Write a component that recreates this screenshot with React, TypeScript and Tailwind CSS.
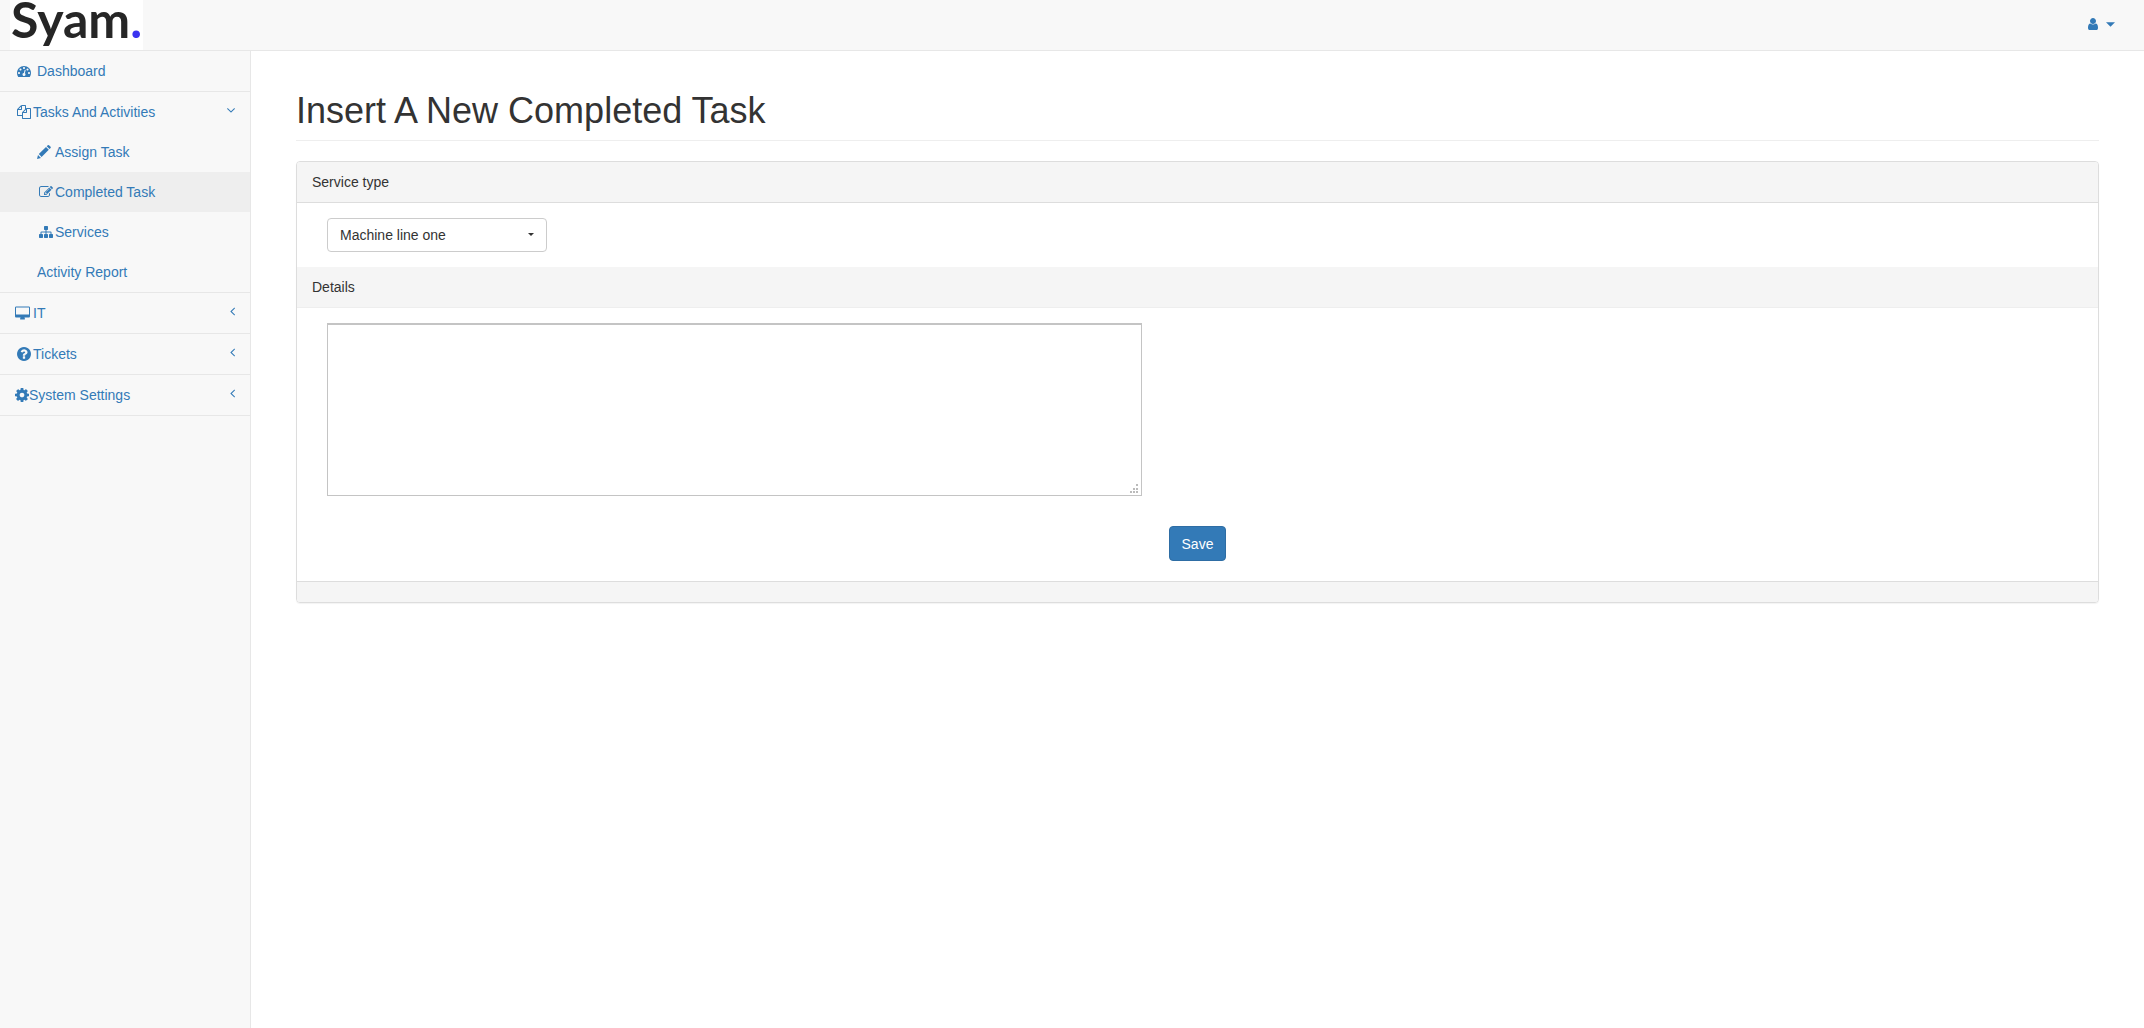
import type { ReactNode } from "react";

const icons = {
  dashboard:
    "M384 1152q0-53-37.5-90.5t-90.5-37.5-90.5 37.5-37.5 90.5 37.5 90.5 90.5 37.5 90.5-37.5 37.5-90.5zm192-448q0-53-37.5-90.5t-90.5-37.5-90.5 37.5-37.5 90.5 37.5 90.5 90.5 37.5 90.5-37.5 37.5-90.5zm428 481l101-382q6-26-7.5-48.5t-38.5-29.5-48 6.5-30 39.5l-101 382q-60 5-107 43.5t-63 98.5q-20 77 20 146t117 89 146-20 89-117q16-60-6-117t-72-91zm660-33q0-53-37.5-90.5t-90.5-37.5-90.5 37.5-37.5 90.5 37.5 90.5 90.5 37.5 90.5-37.5 37.5-90.5zm-640-640q0-53-37.5-90.5t-90.5-37.5-90.5 37.5-37.5 90.5 37.5 90.5 90.5 37.5 90.5-37.5 37.5-90.5zm448 192q0-53-37.5-90.5t-90.5-37.5-90.5 37.5-37.5 90.5 37.5 90.5 90.5 37.5 90.5-37.5 37.5-90.5zm320 448q0 261-141 483-19 29-54 29h-1402q-35 0-54-29-141-221-141-483 0-182 71-348t191-286 286-191 348-71 348 71 286 191 191 286 71 348z",
  files:
    "M1696 384q40 0 68 28t28 68v1216q0 40-28 68t-68 28h-960q-40 0-68-28t-28-68v-288h-544q-40 0-68-28t-28-68v-672q0-40 20-88t48-76l408-408q28-28 76-48t88-20h416q40 0 68 28t28 68v328q68-40 128-40h416zm-544 213l-299 299h299v-299zm-640-384l-299 299h299v-299zm196 647l316-316v-416h-384v416q0 40-28 68t-68 28h-416v640h512v-256q0-40 20-88t48-76zm956 804v-1152h-384v416q0 40-28 68t-68 28h-416v640h896z",
  pencil:
    "M0 14l1-4 3 3zM1.8 9.1L9 1.9l2.8 2.8-7.2 7.2zM9.7 1.2L10.8.2q.6-.4 1.2 0l1.6 1.6q.4.6 0 1.2l-1.1 1z",
  edit: "M888 1184l116-116-152-152-116 116v56h96v96h56zm440-720q-16-16-33 1l-350 350q-17 17-1 33t33-1l350-350q17-17 1-33zm80 594v190q0 119-84.5 203.5t-203.5 84.5h-832q-119 0-203.5-84.5t-84.5-203.5v-832q0-119 84.5-203.5t203.5-84.5h832q63 0 117 25 15 7 18 23 3 17-9 29l-49 49q-14 14-32 8-23-6-45-6h-832q-66 0-113 47t-47 113v832q0 66 47 113t113 47h832q66 0 113-47t47-113v-126q0-13 9-22l64-64q15-15 35-7t20 29zm-96-738l288 288-672 672h-288v-288zm444 132l-92 92-288-288 92-92q28-28 68-28t68 28l152 152q28 28 28 68t-28 68z",
  sitemap:
    "M1792 1248v320q0 40-28 68t-68 28h-320q-40 0-68-28t-28-68v-320q0-40 28-68t68-28h96v-192h-512v192h96q40 0 68 28t28 68v320q0 40-28 68t-68 28h-320q-40 0-68-28t-28-68v-320q0-40 28-68t68-28h96v-192h-512v192h96q40 0 68 28t28 68v320q0 40-28 68t-68 28h-320q-40 0-68-28t-28-68v-320q0-40 28-68t68-28h96v-192q0-52 38-90t90-38h512v-192h-96q-40 0-68-28t-28-68v-320q0-40 28-68t68-28h320q40 0 68 28t28 68v320q0 40-28 68t-68 28h-96v192h512q52 0 90 38t38 90v192h96q40 0 68 28t28 68z",
  desktop:
    "M1792 992v-832q0-13-9.5-22.5t-22.5-9.5h-1600q-13 0-22.5 9.5t-9.5 22.5v832q0 13 9.5 22.5t22.5 9.5h1600q13 0 22.5-9.5t9.5-22.5zm128-832v1088q0 66-47 113t-113 47h-544q0 37 16 77.5t32 71 16 43.5q0 26-19 45t-45 19h-512q-26 0-45-19t-19-45q0-14 16-44t32-70 16-78h-544q-66 0-113-47t-47-113v-1088q0-66 47-113t113-47h1600q66 0 113 47t47 113z",
  question:
    "M1024 1376v-192q0-14-9-23t-23-9h-192q-14 0-23 9t-9 23v192q0 14 9 23t23 9h192q14 0 23-9t9-23zm256-672q0-88-55.5-163t-138.5-116-170-41q-243 0-371 213-15 24 8 42l132 100q7 6 19 6 16 0 25-12 53-68 86-92 34-24 86-24 48 0 85.5 26t37.5 59q0 38-20 61t-68 45q-63 28-115.5 86.5t-52.5 125.5v36q0 14 9 23t23 9h192q14 0 23-9t9-23q0-19 21.5-49.5t54.5-49.5q32-18 49-28.5t46-35 44.5-48 28-60.5 12.5-81zm384 192q0 209-103 385.5t-279.5 279.5-385.5 103-385.5-103-279.5-279.5-103-385.5 103-385.5 279.5-279.5 385.5-103 385.5 103 279.5 279.5 103 385.5z",
  gear: "M1152 896q0-106-75-181t-181-75-181 75-75 181 75 181 181 75 181-75 75-181zm512-109v222q0 12-8 23t-20 13l-185 28q-19 54-39 91 35 50 107 138 10 12 10 25t-9 23q-27 37-99 108t-94 71q-12 0-26-9l-138-108q-44 23-91 38-16 136-29 186-7 28-36 28h-222q-14 0-24.5-8.5t-11.5-21.5l-28-184q-49-16-90-37l-141 107q-10 9-25 9-14 0-25-11-126-114-165-168-7-10-7-23 0-12 8-23 15-21 51-66.5t54-70.5q-27-50-41-99l-183-27q-13-2-21-12.5t-8-23.5v-222q0-12 8-23t19-13l186-28q14-46 39-92-40-57-107-138-10-12-10-24 0-10 9-23 26-36 98.5-107.5t94.5-71.5q13 0 26 10l138 107q44-23 91-38 16-136 29-186 7-28 36-28h222q14 0 24.5 8.5t11.5 21.5l28 184q49 16 90 37l142-107q9-9 24-9 13 0 25 10 129 119 165 170 7 8 7 22 0 12-8 23-15 21-51 66.5t-54 70.5q26 50 41 98l183 28q13 2 21 12.5t8 23.5z",
  user: "M1536 1399q0 109-62.5 187t-150.5 78h-854q-88 0-150.5-78t-62.5-187q0-85 8.5-160.5t31.5-152 58.5-131 94-89 134.5-34.5q131 128 313 128t313-128q76 0 134.5 34.5t94 89 58.5 131 31.5 152 8.5 160.5zm-256-887q0 159-112.5 271.5t-271.5 112.5-271.5-112.5-112.5-271.5 112.5-271.5 271.5-112.5 271.5 112.5 112.5 271.5z",
  angleLeft:
    "M1403 544q0 13-10 23l-393 393 393 393q10 10 10 23t-10 23l-50 50q-10 10-23 10t-23-10l-466-466q-10-10-10-23t10-23l466-466q10-10 23-10t23 10l50 50q10 10 10 23z",
  angleDown:
    "M1395 736q0 13-10 23l-466 466q-10 10-23 10t-23-10l-466-466q-10-10-10-23t10-23l50-50q10-10 23-10t23 10l393 393 393-393q10-10 23-10t23 10l50 50q10 10 10 23z",
};

type IconName = keyof typeof icons;

interface IconProps {
  name: IconName;
  viewBox?: string;
  className?: string;
}

function Icon({ name, viewBox = "0 0 1792 1792", className = "w-3.5 h-3.5" }: IconProps) {
  return (
    <svg viewBox={viewBox} className={`shrink-0 fill-current ${className}`} aria-hidden="true">
      <path d={icons[name]} />
    </svg>
  );
}

interface NavItemProps {
  icon: ReactNode;
  label: string;
  arrow?: IconName;
  children?: ReactNode;
}

function NavItem({ icon, label, arrow, children }: NavItemProps) {
  return (
    <li className="border-b border-[#e7e7e7]">
      <a href="#" className="flex items-center h-10 pl-[15px] pr-3 hover:bg-[#eee]">
        {icon}
        <span className="flex-1">{label}</span>
        {arrow && <Icon name={arrow} className="w-3.5 h-3.5 mb-1" />}
      </a>
      {children}
    </li>
  );
}

interface SubItemProps {
  icon?: ReactNode;
  label: string;
  active?: boolean;
}

function SubItem({ icon, label, active }: SubItemProps) {
  return (
    <li>
      <a
        href="#"
        className={`flex items-center h-10 pl-[37px] hover:bg-[#eee] ${active ? "bg-[#eee]" : ""}`}
      >
        {icon}
        {label}
      </a>
    </li>
  );
}

function Sidebar() {
  return (
    <nav className="w-[250px] shrink-0 bg-[#f8f8f8] text-[#337ab7]">
      <ul>
        <NavItem icon={<Icon name="dashboard" className="w-3.5 h-3.5 ml-0.5 mr-[6px]" />} label="Dashboard" />
        <NavItem
          icon={<Icon name="files" className="w-3.5 h-3.5 mx-0.5" />}
          label="Tasks And Activities"
          arrow="angleDown"
        >
          <ul>
            <SubItem
              icon={<Icon name="pencil" viewBox="0 0 14 14" className="w-3.5 h-3.5 mr-1" />}
              label="Assign Task"
            />
            <SubItem icon={<Icon name="edit" className="w-3.5 h-3.5 mx-0.5" />} label="Completed Task" active />
            <SubItem icon={<Icon name="sitemap" className="w-3.5 h-3.5 mx-0.5" />} label="Services" />
            <SubItem label="Activity Report" />
          </ul>
        </NavItem>
        <NavItem
          icon={<Icon name="desktop" viewBox="0 -64 1920 1792" className="w-[15px] h-3.5 mr-[3px]" />}
          label="IT"
          arrow="angleLeft"
        />
        <NavItem
          icon={<Icon name="question" viewBox="128 128 1536 1536" className="w-3.5 h-3.5 mx-0.5" />}
          label="Tickets"
          arrow="angleLeft"
        />
        <NavItem
          icon={<Icon name="gear" viewBox="128 128 1536 1536" className="w-3.5 h-3.5" />}
          label="System Settings"
          arrow="angleLeft"
        />
      </ul>
    </nav>
  );
}

function TopBar() {
  return (
    <header className="flex justify-between h-[51px] bg-[#f8f8f8] border-b border-[#e7e7e7]">
      <a
        href="#"
        className="ml-2.5 h-[50px] w-[133px] pl-px bg-white font-[Lato,sans-serif] font-bold text-[50px] leading-[38px] text-[#262626]"
      >
        Syam<span className="text-[#3a33f0]">.</span>
      </a>
      <button
        type="button"
        aria-label="Account"
        className="flex items-center gap-[6px] pb-0.5 mr-[29px] text-[#337ab7]"
      >
        <Icon name="user" />
        <svg viewBox="0 0 8 4" className="w-[9px] h-[5px] fill-current" aria-hidden="true">
          <path d="M0 0h8L4 4z" />
        </svg>
      </button>
    </header>
  );
}

function TaskForm() {
  return (
    <form className="border border-[#ddd] rounded shadow-[0_1px_1px_rgba(0,0,0,0.05)]">
      <div className="px-[15px] py-2.5 bg-[#f5f5f5] border-b border-[#ddd] rounded-t-[3px]">
        <label htmlFor="service">Service type</label>
      </div>
      <div className="px-[30px] py-[15px]">
        <div className="relative w-[220px]">
          <select
            id="service"
            className="block w-full h-[34px] px-3 appearance-none bg-white border border-[#ccc] rounded"
          >
            <option>Machine line one</option>
          </select>
          <svg
            viewBox="0 0 6 3"
            className="absolute right-[13px] top-[15px] w-[6px] h-[3px] fill-current pointer-events-none"
            aria-hidden="true"
          >
            <path d="M0 0h6L3 3z" />
          </svg>
        </div>
      </div>
      <div className="px-[15px] py-2.5 bg-[#f5f5f5] border-b border-[#eee]">
        <label htmlFor="details">Details</label>
      </div>
      <div className="px-[30px] py-[15px]">
        <div className="relative w-[815px] max-w-full">
          <textarea
            id="details"
            className="block w-full h-[173px] p-1 resize-none bg-white border border-t-2 border-[#c4c4c4]"
          />
          <svg
            viewBox="0 0 10 10"
            className="absolute right-[3px] bottom-0.5 w-2.5 h-2.5 fill-[#bbb] pointer-events-none"
            aria-hidden="true"
          >
            <path d="M7 0h2v2H7zM4 4h2v2H4zM7 4h2v2H7zM1 7h2v2H1zM4 7h2v2H4zM7 7h2v2H7z" />
          </svg>
        </div>
        <div className="flex justify-center pt-[30px] pb-[5px]">
          <button
            type="button"
            className="h-[35px] px-3 bg-[#337ab7] border border-[#2e6da4] rounded text-white hover:bg-[#286090]"
          >
            Save
          </button>
        </div>
      </div>
      <div className="h-[21px] bg-[#f5f5f5] border-t border-[#ddd] rounded-b-[3px]" />
    </form>
  );
}

export default function App() {
  return (
    <div className="flex flex-col min-h-screen bg-[#f8f8f8] font-['Liberation_Sans',Arial,sans-serif] text-[14px] leading-5 text-[#333]">
      <TopBar />
      <div className="flex flex-1">
        <Sidebar />
        <main className="flex-1 min-w-0 px-[45px] pt-10 bg-white border-l border-[#e7e7e7]">
          <h1 className="pb-[9px] mb-5 border-b border-[#eee] text-[36px] leading-10">
            Insert A New Completed Task
          </h1>
          <TaskForm />
        </main>
      </div>
    </div>
  );
}
